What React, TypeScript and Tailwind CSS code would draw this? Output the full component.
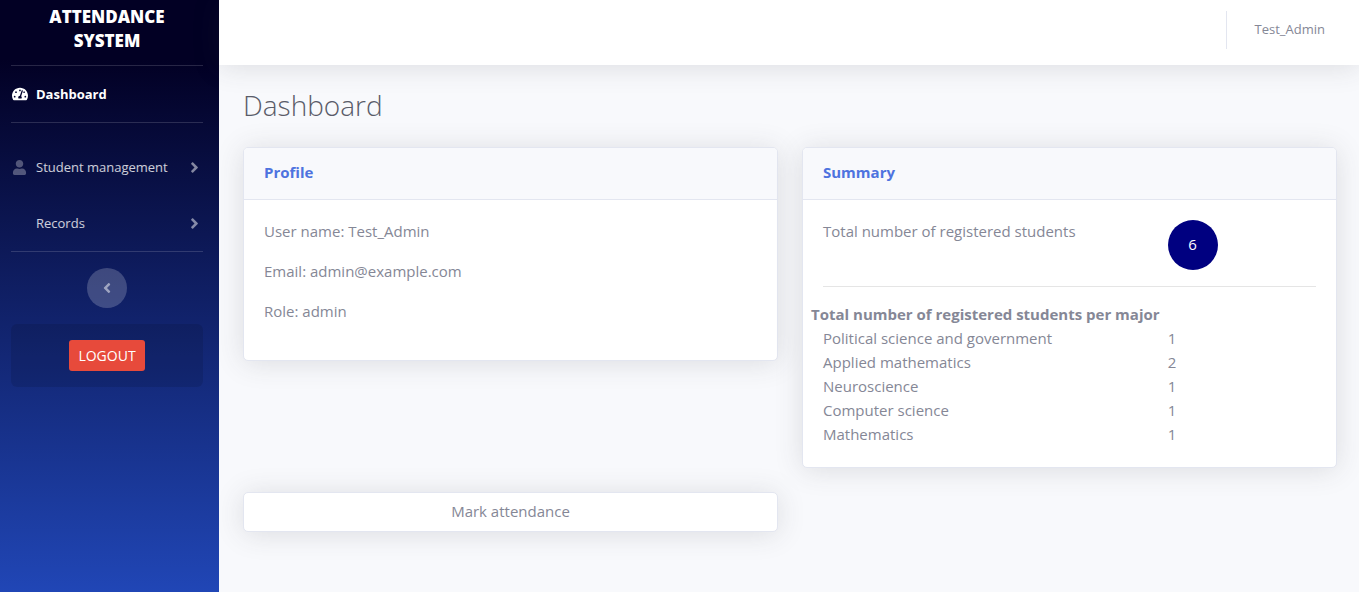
import React from 'react';
import { FaAngleLeft, FaAngleRight, FaTachometerAlt, FaUser } from 'react-icons/fa';

const majors = [
  { name: 'Political science and government', count: 1 },
  { name: 'Applied mathematics', count: 2 },
  { name: 'Neuroscience', count: 1 },
  { name: 'Computer science', count: 1 },
  { name: 'Mathematics', count: 1 },
];

const cardShadow = 'shadow-[0_2px_28px_rgba(58,59,69,0.15)]';

function Divider() {
  return <hr className="border-t border-white/15" />;
}

function NavItem({ label, icon }: { label: string; icon?: React.ReactNode }) {
  return (
    <button
      type="button"
      className="flex h-14 w-full items-center text-left text-[13px] text-white/80"
    >
      <span className="flex w-[25px] shrink-0 pl-px text-white/30">{icon}</span>
      <span className="grow whitespace-nowrap">{label}</span>
      <FaAngleRight className="size-[17px] text-white/50" aria-hidden="true" />
    </button>
  );
}

function Sidebar() {
  return (
    <nav
      aria-label="Main"
      className="flex w-[219px] shrink-0 flex-col bg-linear-to-b/srgb from-[#020024] from-10% to-[#224abe] to-105% pt-[5px] pr-4 pb-4 pl-[11px]"
    >
      <a
        href="#"
        className="mb-3 block px-4 text-center text-[17px] leading-6 font-extrabold text-white uppercase"
      >
        Attendance System
      </a>
      <Divider />
      <a href="#" className="flex h-14 items-center text-[13px] font-bold text-white">
        <span className="flex w-[25px] shrink-0 pl-px">
          <FaTachometerAlt className="size-4" aria-hidden="true" />
        </span>
        Dashboard
      </a>
      <Divider />
      <div className="pt-4">
        <NavItem label="Student management" icon={<FaUser className="size-[15px]" aria-hidden="true" />} />
        <NavItem label="Records" />
      </div>
      <Divider />
      <button
        type="button"
        aria-label="Collapse sidebar"
        className="my-4 flex size-10 items-center justify-center self-center rounded-full bg-white/20 text-white/50"
      >
        <FaAngleLeft className="size-4" aria-hidden="true" />
      </button>
      <div className="flex justify-center rounded-md bg-black/10 p-4">
        <button
          type="button"
          className="rounded-[3px] bg-[#e74a3b] px-[9px] py-[5px] text-sm leading-[21px] text-white"
        >
          LOGOUT
        </button>
      </div>
    </nav>
  );
}

function Card({ title, children }: { title: string; children: React.ReactNode }) {
  return (
    <section className={`rounded-[5px] border border-[#e3e6f0] bg-white ${cardShadow}`}>
      <h2 className="rounded-t border-b border-[#e3e6f0] bg-[#f8f9fc] px-5 pt-[15px] pb-[17px] leading-[19px] font-bold text-[#4e73df]">
        {title}
      </h2>
      <div className="px-5 pt-[19px] pb-[21px]">{children}</div>
    </section>
  );
}

export default function App() {
  return (
    <div className="flex min-h-screen bg-[#f8f9fc] font-['Open_Sans',sans-serif] text-[15px] leading-6 text-[#858796]">
      <Sidebar />
      <div className="flex min-w-0 grow flex-col">
        <header className={`flex h-[65px] justify-end bg-white pt-[11px] pr-[34px] ${cardShadow}`}>
          <div className="flex h-[38px] items-center border-l border-[#e3e6f0] pl-7">
            <a href="#" className="pb-0.5 text-[13px]">
              Test_Admin
            </a>
          </div>
        </header>
        <main className="pt-[23px] pr-[22px] pb-6 pl-6">
          <h1 className="mb-[25px] text-[28px] leading-[34px] font-light text-[#5a5c69]">Dashboard</h1>
          <div className="grid grid-cols-2 items-start gap-6">
            <Card title="Profile">
              <div className="space-y-4 pb-4">
                <p>User name: Test_Admin</p>
                <p>Email: admin@example.com</p>
                <p>Role: admin</p>
              </div>
            </Card>
            <Card title="Summary">
              <div className="-mx-3 grid grid-cols-[2fr_1fr]">
                <p className="px-3">Total number of registered students</p>
                <div className="px-3 pt-px">
                  <span className="flex size-[50px] items-center justify-center rounded-full bg-[#000080] pb-0.5 text-white">
                    6
                  </span>
                </div>
              </div>
              <hr className="mt-4 mb-[15px] border-black/10" />
              <table className="-mx-3 w-[calc(100%+24px)] table-fixed">
                <caption className="text-left font-bold">
                  Total number of registered students per major
                </caption>
                <tbody>
                  {majors.map((m) => (
                    <tr key={m.name}>
                      <td className="w-2/3 px-3">{m.name}</td>
                      <td className="px-3">{m.count}</td>
                    </tr>
                  ))}
                </tbody>
              </table>
            </Card>
            <button
              type="button"
              className={`h-10 rounded-[5px] border border-[#e3e6f0] bg-white pb-0.5 ${cardShadow}`}
            >
              Mark attendance
            </button>
          </div>
        </main>
      </div>
    </div>
  );
}
